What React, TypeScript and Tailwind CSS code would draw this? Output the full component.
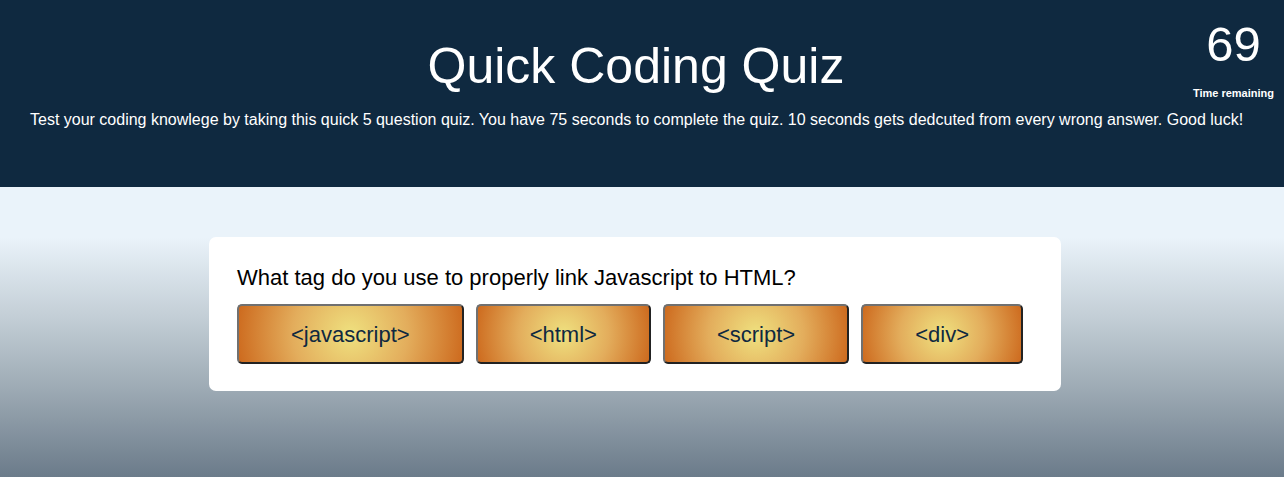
import React from 'react'

const answers = ['<javascript>', '<html>', '<script>', '<div>']

export default function App() {
  return (
    <div className="min-h-[477px] flex flex-col font-['Liberation_Sans',Arial,sans-serif]">
      {/* Header */}
      <header className="relative h-[187px] bg-[#0f2940] text-white">
        <h1 className="pt-[38px] pr-[12px] text-center text-[50px] leading-[56px]">Quick Coding Quiz</h1>
        <p className="mt-[16px] pl-[30px] text-[16px] leading-[20px]">
          Test your coding knowlege by taking this quick 5 question quiz. You have 75 seconds to complete the quiz. 10 seconds gets dedcuted from every wrong answer. Good luck!
        </p>
        <div className="absolute top-[16px] right-[10px] flex flex-col items-center">
          <span className="text-[49px] leading-[56px]">69</span>
          <span className="mt-[14px] text-[11px] font-bold leading-[14px]">Time remaining</span>
        </div>
      </header>

      {/* Quiz card */}
      <main className="flex-1 flex justify-center pt-[50px] bg-[linear-gradient(to_bottom,#eaf3fa_0px,#eaf3fa_50px,#c3ced6_130px,#9eabb5_200px,#6b7b8a_290px)]">
        <div className="w-[852px] h-[154px] bg-white rounded-[7px] px-[28px] pt-[28px] -translate-x-[7px]">
          <p className="text-[22px] leading-[26px] text-black">What tag do you use to properly link Javascript to HTML?</p>
          <div className="mt-[13px] flex gap-[12px]">
            {answers.map(a => (
              <button
                key={a}
                className="h-[60px] px-[52px] rounded-[5px] border-2 border-t-[#707070] border-l-[#707070] border-b-[#222] border-r-[#222] text-[22px] text-[#0f2940] bg-[radial-gradient(circle,#efe17f_0%,#e3ad5c_50%,#cd6a1e_100%)]"
              >
                {a}
              </button>
            ))}
          </div>
        </div>
      </main>
    </div>
  )
}
